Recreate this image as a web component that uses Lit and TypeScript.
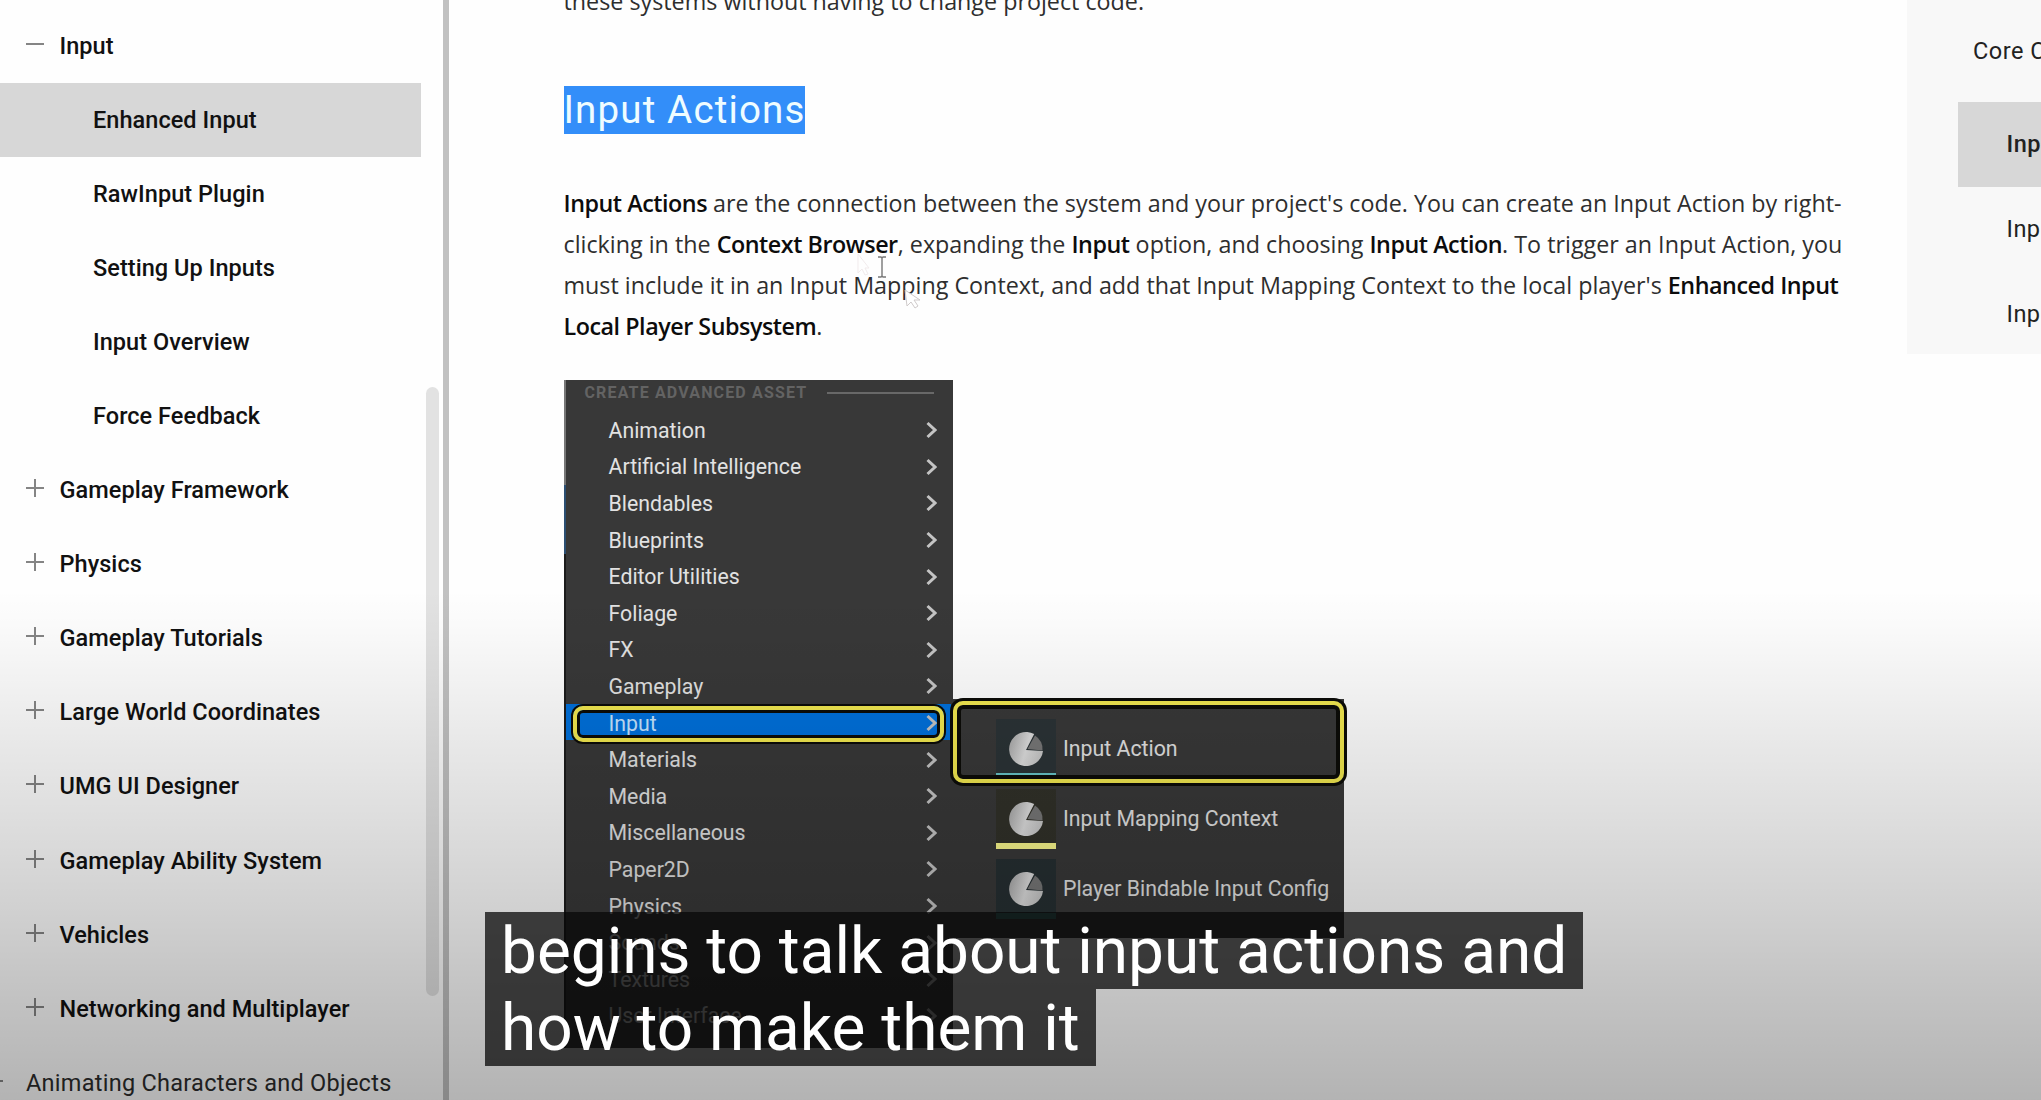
import { LitElement, html, css, svg, nothing } from 'lit';
import { customElement } from 'lit/decorators.js';
import { classMap } from 'lit/directives/class-map.js';

interface NavItem {
  label: string;
  icon?: 'plus' | 'minus';
  child?: boolean;
  selected?: boolean;
}

const NAV_ITEMS: NavItem[] = [
  { label: 'Input', icon: 'minus' },
  { label: 'Enhanced Input', child: true, selected: true },
  { label: 'RawInput Plugin', child: true },
  { label: 'Setting Up Inputs', child: true },
  { label: 'Input Overview', child: true },
  { label: 'Force Feedback', child: true },
  { label: 'Gameplay Framework', icon: 'plus' },
  { label: 'Physics', icon: 'plus' },
  { label: 'Gameplay Tutorials', icon: 'plus' },
  { label: 'Large World Coordinates', icon: 'plus' },
  { label: 'UMG UI Designer', icon: 'plus' },
  { label: 'Gameplay Ability System', icon: 'plus' },
  { label: 'Vehicles', icon: 'plus' },
  { label: 'Networking and Multiplayer', icon: 'plus' },
];

const ASSET_TYPES = [
  'Animation',
  'Artificial Intelligence',
  'Blendables',
  'Blueprints',
  'Editor Utilities',
  'Foliage',
  'FX',
  'Gameplay',
  'Input',
  'Materials',
  'Media',
  'Miscellaneous',
  'Paper2D',
  'Physics',
  'Sounds',
  'Textures',
  'User Interface',
];

const INPUT_ASSETS = [
  { label: 'Input Action', tone: 'teal' },
  { label: 'Input Mapping Context', tone: 'yellow' },
  { label: 'Player Bindable Input Config', tone: 'dark' },
];

@customElement('side-nav')
export class SideNav extends LitElement {
  static styles = css`
    :host {
      display: block;
      position: relative;
      box-sizing: border-box;
      flex: none;
      width: 449px;
      height: 1100px;
      padding-top: 9px;
      border-right: 6px solid #c1c1c1;
      font-family: Roboto, sans-serif;
      font-size: 23.5px;
      font-weight: 500;
      letter-spacing: 0.05px;
      color: #111;
      overflow: hidden;
    }

    .row {
      display: flex;
      align-items: center;
      box-sizing: border-box;
      width: 421px;
      height: 74.06px;
      padding-left: 26px;
      white-space: nowrap;
    }

    .child {
      padding-left: 93px;
    }

    .selected {
      background: #d7d7d7;
    }

    .icon {
      width: 18px;
      height: 18px;
      margin: 0 15.5px 4px 0;
      stroke: #858585;
      stroke-width: 2;
    }

    .section {
      width: 447px;
      padding-left: 0;
      font-weight: 400;
      letter-spacing: 0.27px;
      color: #2c2c2c;
    }

    .section .icon {
      width: 7px;
      margin: 0 19px 4px 0;
    }

    .thumb {
      position: absolute;
      left: 426px;
      top: 387px;
      width: 13px;
      height: 609px;
      border-radius: 7px;
      background: #e2e2e2;
    }
  `;

  renderIcon(icon: string) {
    return html`
      <svg class="icon" viewBox="0 0 18 18">
        <path d=${icon === 'plus' ? 'M0 9H18M9 0V18' : 'M0 9H18'}></path>
      </svg>
    `;
  }

  render() {
    return html`
      ${NAV_ITEMS.map(
        item => html`
          <div class=${classMap({ row: true, child: !!item.child, selected: !!item.selected })}>
            ${item.icon ? this.renderIcon(item.icon) : nothing}
            <span>${item.label}</span>
          </div>
        `
      )}
      <div class="row section">
        <svg class="icon" viewBox="0 0 7 18"><path d="M0 9H3"></path></svg>
        <span>Animating Characters and Objects</span>
      </div>
      <div class="thumb"></div>
    `;
  }
}

@customElement('asset-menu')
export class AssetMenu extends LitElement {
  static styles = css`
    :host {
      display: block;
      position: relative;
      width: 389px;
      height: 668px;
      background:
        linear-gradient(#777 105px, #2c4f72 105px, #2c4f72 174px, #1c1c1c 174px) 0 0 / 2px 100% no-repeat,
        #383838;
      font-family: Roboto, sans-serif;
      font-size: 21.3px;
      color: #e2e2e2;
      white-space: nowrap;
    }

    .title {
      display: flex;
      align-items: center;
      gap: 20px;
      height: 25px;
      padding: 0 19px 6px 21px;
      font-size: 16px;
      font-weight: 700;
      letter-spacing: 1.15px;
      color: #636363;
    }

    .rule {
      flex: 1;
      height: 2px;
      background: #686868;
    }

    .item {
      display: flex;
      align-items: center;
      justify-content: space-between;
      box-sizing: border-box;
      height: 36.6px;
      margin: 0 2px 0 2px;
      padding: 2px 14px 0 43px;
    }

    .active {
      background: #0070db;
      color: #c6e4ff;
    }

    .chevron {
      width: 11px;
      height: 18px;
      fill: none;
      stroke: #c4c4c4;
      stroke-width: 3;
    }

    .ring {
      position: absolute;
      box-sizing: border-box;
      border: 4px solid #f2e84f;
      border-radius: 10px;
      box-shadow: 0 0 0 2px #0c0c08, inset 0 0 0 3px #0c0c08;
    }

    .ring-row {
      left: 9px;
      top: 325.5px;
      width: 371px;
      height: 36px;
    }

    .ring-action {
      left: 389.5px;
      top: 321px;
      width: 391px;
      height: 82px;
      box-shadow: 0 0 0 3px #0c0c08, inset 0 0 0 4px #0c0c08;
    }

    .submenu {
      position: absolute;
      left: 389px;
      top: 319px;
      box-sizing: border-box;
      width: 391px;
      height: 239px;
      padding: 20px 0 0 43px;
      background: #383838;
    }

    .asset {
      display: flex;
      align-items: center;
      gap: 7px;
      height: 70px;
    }

    .tile {
      display: flex;
      align-items: center;
      justify-content: center;
      box-sizing: border-box;
      width: 60.5px;
      height: 60px;
      margin-bottom: 10px;
      padding-top: 5px;
      border-bottom: 6px solid #fbf98c;
      background: #313129;
    }

    .teal {
      height: 57px;
      margin-bottom: 13px;
      border-bottom: 3px solid #68c4c8;
      background: #2b3336;
    }

    .dark {
      border-bottom-color: #36706e;
      background: #262f32;
    }

    .pie {
      width: 36px;
      height: 36px;
    }

    .name {
      margin-bottom: 11px;
    }
  `;

  renderPie() {
    return svg`
      <svg class="pie" viewBox="-18 -18 36 36">
        <defs>
          <linearGradient id="shade" x1="0" y1="0" x2="1" y2="0.3">
            <stop offset="0" stop-color="#a2a2a2"></stop>
            <stop offset="0.6" stop-color="#dedede"></stop>
            <stop offset="1" stop-color="#c9c9c9"></stop>
          </linearGradient>
        </defs>
        <path d="M0 1L8.2 -14.9A17 17 0 1 0 17 2Z" fill="url(#shade)"></path>
        <path d="M1.5 0L9 -13.6A16.5 16.5 0 0 1 16.5 1.4Z" fill="#777"></path>
      </svg>
    `;
  }

  render() {
    return html`
      <div class="title"><span>CREATE ADVANCED ASSET</span><span class="rule"></span></div>
      <div class="list">
        ${ASSET_TYPES.map(
          name => html`
            <div class=${classMap({ item: true, active: name === 'Input' })}>
              <span>${name}</span>
              <svg class="chevron" viewBox="0 0 11 18"><path d="M1.5 2L9 9L1.5 16"></path></svg>
            </div>
          `
        )}
      </div>
      <div class="submenu">
        ${INPUT_ASSETS.map(
          asset => html`
            <div class="asset">
              <div class="tile ${asset.tone}">${this.renderPie()}</div>
              <span class="name">${asset.label}</span>
            </div>
          `
        )}
      </div>
      <div class="ring ring-row"></div>
      <div class="ring ring-action"></div>
    `;
  }
}

@customElement('app-root')
export class AppRoot extends LitElement {
  static styles = css`
    :host {
      display: flex;
      position: relative;
      width: 2041px;
      height: 1100px;
      overflow: hidden;
      background: #fefefe;
      font-family: 'Open Sans', sans-serif;
    }

    article {
      flex: none;
      width: 1343px;
      padding-left: 114.5px;
      font-size: 23.3px;
      line-height: 41px;
      color: #2e2e2e;
      white-space: nowrap;
    }

    p {
      margin: 0;
    }

    b {
      font-weight: 600;
      letter-spacing: -0.46px;
      color: #0c0c0c;
    }

    .lead {
      margin-top: -19px;
    }

    h2 {
      display: flex;
      margin: 64px 0 49px;
      font-family: Roboto, sans-serif;
      font-size: 38.5px;
      font-weight: 400;
      line-height: 48px;
      letter-spacing: 1.15px;
      color: #effcff;
    }

    .marked {
      background: #338ef9;
    }

    asset-menu {
      margin-top: 33px;
    }

    aside {
      flex: 1;
      height: 354px;
      overflow: hidden;
      background: #f8f8f8;
      font-family: Roboto, sans-serif;
      font-size: 23.5px;
      letter-spacing: 0.5px;
      color: #222;
      white-space: nowrap;
    }

    .toc-title {
      height: 102px;
      padding-left: 66.5px;
      line-height: 103px;
    }

    .toc-item {
      height: 85px;
      margin-left: 51px;
      padding-left: 49px;
      line-height: 85px;
    }

    .current {
      background: #d7d7d7;
      font-weight: 500;
    }

    .pointer {
      position: absolute;
      fill: none;
    }

    .ibeam {
      left: 877px;
      top: 256px;
      stroke: #777;
      stroke-width: 1.4;
    }

    .arrow {
      left: 904px;
      top: 289px;
      fill: #fff;
      stroke: #cfcaca;
    }

    .trail {
      left: 857px;
      top: 253px;
      stroke: #f1ebec;
    }

    .shade {
      position: absolute;
      inset: 590px 0 0 0;
      background: linear-gradient(
        rgba(0, 0, 0, 0),
        rgba(0, 0, 0, 0.02) 8%,
        rgba(0, 0, 0, 0.085) 30%,
        rgba(0, 0, 0, 0.145) 51%,
        rgba(0, 0, 0, 0.182) 63%,
        rgba(0, 0, 0, 0.222) 76%,
        rgba(0, 0, 0, 0.293)
      );
    }

    .caption {
      position: absolute;
      left: 485px;
      top: 912px;
      display: flex;
      flex-direction: column;
      align-items: flex-start;
      font-family: Roboto, sans-serif;
      font-size: 63.9px;
      line-height: 75px;
      color: #fff;
      white-space: nowrap;
    }

    .line {
      padding: 2px 16px 0;
      background: rgba(8, 8, 8, 0.75);
    }
  `;

  render() {
    return html`
      <side-nav></side-nav>
      <article>
        <p class="lead">these systems without having to change project code.</p>
        <h2><span class="marked">Input Actions</span></h2>
        <p>
          <b>Input Actions</b> are the connection between the system and your project's code. You can create an Input Action by right-<br />
          clicking in the <b>Context Browser</b>, expanding the <b>Input</b> option, and choosing <b>Input Action</b>. To trigger an Input Action, you<br />
          must include it in an Input Mapping Context, and add that Input Mapping Context to the local player's <b>Enhanced Input</b><br />
          <b>Local Player Subsystem</b>.
        </p>
        <asset-menu></asset-menu>
      </article>
      <aside>
        <div class="toc-title">Core Concepts</div>
        <div class="toc-item current">Input Actions</div>
        <div class="toc-item">Input Mapping Contexts</div>
        <div class="toc-item">Input Modifiers</div>
      </aside>
      <svg class="pointer trail" width="13" height="24"><path d="M1 1V20L5 16L8 22L11 21L8 15H12Z"></path></svg>
      <svg class="pointer ibeam" width="10" height="22"><path d="M1 1H4L5 2L6 1H9M1 21H4L5 20L6 21H9M5 2V20"></path></svg>
      <svg class="pointer arrow" width="18" height="20"><path d="M1 1L3 17L7 13L11 19L14 17L10 11H16Z"></path></svg>
      <div class="shade"></div>
      <div class="caption">
        <span class="line">begins to talk about input actions and</span>
        <span class="line">how to make them it</span>
      </div>
    `;
  }
}
